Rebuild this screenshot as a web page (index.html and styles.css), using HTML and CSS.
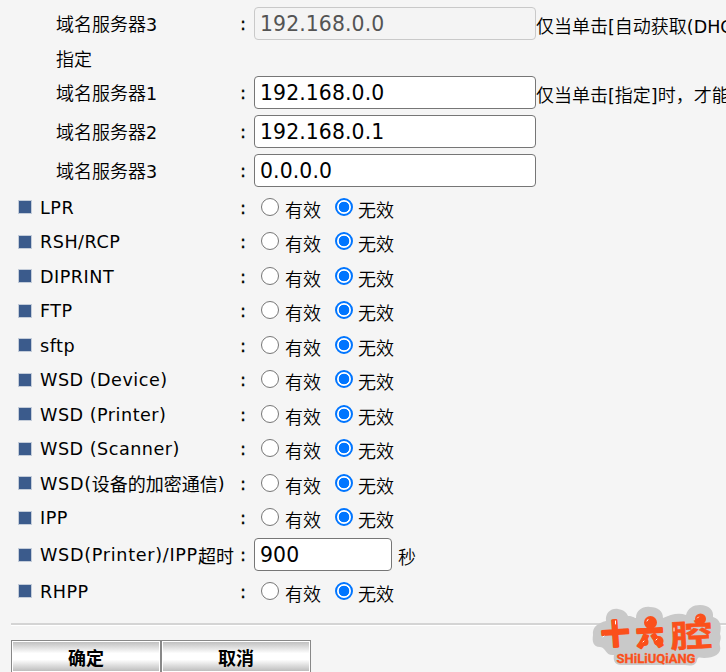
FILE: index.html
```html
<!DOCTYPE html>
<html lang="zh-CN">
<head>
<meta charset="utf-8">
<title>网络设置</title>
<link rel="stylesheet" href="styles.css">
</head>
<body>
<form class="settings">
  <div class="row field"><span class="label sub">域名服务器<i>3</i></span><span class="colon">:</span><input class="ip" value="192.168.0.0" disabled><span class="note">仅当单击<i>[</i>自动获取<i>(DHC</i></span></div>
  <div class="row heading"><span class="label sub">指定</span></div>
  <div class="row field"><span class="label sub">域名服务器<i>1</i></span><span class="colon">:</span><input class="ip" value="192.168.0.0"><span class="note">仅当单击<i>[</i>指定<i>]</i>时，才能</span></div>
  <div class="row field"><span class="label sub">域名服务器<i>2</i></span><span class="colon">:</span><input class="ip" value="192.168.0.1"></div>
  <div class="row field"><span class="label sub">域名服务器<i>3</i></span><span class="colon">:</span><input class="ip" value="0.0.0.0"></div>
  <div class="row"><span class="label item">LPR</span><span class="colon">:</span><label class="opt"><input type="radio" name="lpr">有效</label><label class="opt"><input type="radio" name="lpr" checked>无效</label></div>
  <div class="row"><span class="label item">RSH/RCP</span><span class="colon">:</span><label class="opt"><input type="radio" name="rsh">有效</label><label class="opt"><input type="radio" name="rsh" checked>无效</label></div>
  <div class="row"><span class="label item">DIPRINT</span><span class="colon">:</span><label class="opt"><input type="radio" name="diprint">有效</label><label class="opt"><input type="radio" name="diprint" checked>无效</label></div>
  <div class="row"><span class="label item">FTP</span><span class="colon">:</span><label class="opt"><input type="radio" name="ftp">有效</label><label class="opt"><input type="radio" name="ftp" checked>无效</label></div>
  <div class="row"><span class="label item">sftp</span><span class="colon">:</span><label class="opt"><input type="radio" name="sftp">有效</label><label class="opt"><input type="radio" name="sftp" checked>无效</label></div>
  <div class="row"><span class="label item">WSD (Device)</span><span class="colon">:</span><label class="opt"><input type="radio" name="device">有效</label><label class="opt"><input type="radio" name="device" checked>无效</label></div>
  <div class="row"><span class="label item">WSD (Printer)</span><span class="colon">:</span><label class="opt"><input type="radio" name="printer">有效</label><label class="opt"><input type="radio" name="printer" checked>无效</label></div>
  <div class="row"><span class="label item">WSD (Scanner)</span><span class="colon">:</span><label class="opt"><input type="radio" name="scanner">有效</label><label class="opt"><input type="radio" name="scanner" checked>无效</label></div>
  <div class="row"><span class="label item tight">WSD(<b>设备的加密通信</b>)</span><span class="colon">:</span><label class="opt"><input type="radio" name="secure">有效</label><label class="opt"><input type="radio" name="secure" checked>无效</label></div>
  <div class="row"><span class="label item">IPP</span><span class="colon">:</span><label class="opt"><input type="radio" name="ipp">有效</label><label class="opt"><input type="radio" name="ipp" checked>无效</label></div>
  <div class="row field"><span class="label item tight">WSD(Printer)/IPP<b>超时</b></span><span class="colon">:</span><input class="ip seconds" value="900"><span class="note unit">秒</span></div>
  <div class="row"><span class="label item">RHPP</span><span class="colon">:</span><label class="opt"><input type="radio" name="rhpp">有效</label><label class="opt"><input type="radio" name="rhpp" checked>无效</label></div>
  <hr>
  <div class="actions"><button type="button">确定</button><button type="button">取消</button></div>
</form>
<svg class="logo" viewBox="0 0 140 76" width="140" height="76" aria-label="十六腔">
  <path fill="#c9c9c9" d="M7 39C6 31 12 27 20 25C19 17 25 12 32 13C38 14 41 17 42 20C47 20 48 22 50 22C50 14 57 10 64 11C72 11 77 15 77 22C84 19 92 16 100 19C102 12 107 9 114 9C123 9 128 14 127 21C134 23 136 29 134 38C136 43 133 45 134 50C136 58 128 62 118 62C115 62 112 60 111 64C110 70 105 70 99 69H37C28 70 27 63 28 59C19 60 21 52 14 51C7 51 6 45 7 39Z"/>
  <g class="logo-name">
    <text transform="translate(16 49) rotate(-4)">十</text>
    <text transform="translate(51 50) rotate(-3) scale(.96 .98)">六</text>
    <text transform="translate(85 52) rotate(-3) scale(1.5 1.12)" class="logo-wide">腔</text>
  </g>
  <g fill="#fb501b"><circle cx="64.5" cy="26.5" r="6.5"/><circle cx="114.5" cy="23" r="5.5"/><circle cx="72.5" cy="45" r="5"/><circle cx="58.5" cy="46" r="4"/></g>
  <path fill="none" stroke="#fff" stroke-linecap="round" d="M29.5 25V28M17 41L18 40M61 25L62 23.5M57 46L58 45M70 44L71 43M88 32V35M111.500 22L112.500 21"/>
  <text class="logo-latin" x="30.5" y="67" textLength="79" lengthAdjust="spacingAndGlyphs">SHiLiUQiANG</text>
</svg>
</body>
</html>
```

FILE: styles.css
```css
* { box-sizing: border-box; }
body {
  margin: 0;
  height: 672px;
  overflow: hidden;
  position: relative;
  background: #f5f5f5;
  color: #000;
  font: 350 18px/30px "Noto Sans CJK SC", sans-serif;
}
.settings { width: 726px; padding-top: 4px; }
.row { display: flex; align-items: center; height: 34.5px; white-space: nowrap; }
.row > * { flex-shrink: 0; }
.field { height: 39px; }
.heading { height: 30px; }
.label { width: 240px; }
.sub { padding: 0 0 1px 56px; }
i { font: 17.5px "DejaVu Sans", sans-serif; }
.item {
  display: flex;
  align-items: center;
  padding: 1px 0 0 19px;
  font: 17.6px/30px "DejaVu Sans", sans-serif;
  letter-spacing: 0.5px;
}
.tight { letter-spacing: 0.7px; }
.item b { font: 18px/30px "Noto Sans CJK SC", sans-serif; letter-spacing: 0; margin-top: -1px; }
.item::before {
  content: "";
  width: 12px;
  height: 12px;
  margin: -1px 9px 0 0;
  background: #3b5b8c;
  box-shadow: 0 0 0 1px #c3ccd9;
}
.colon { width: 14px; padding-top: 1px; font: 18px/30px "DejaVu Sans", sans-serif; -webkit-text-stroke: 0.3px #000; }
.ip {
  width: 282px;
  height: 33px;
  margin: 0;
  padding: 2px 5px 1px;
  border: 1px solid #767676;
  border-radius: 4px;
  background: #fff;
  color: #000;
  font: 20.4px "DejaVu Sans", sans-serif;
  letter-spacing: 0.1px;
}
.ip:disabled { background: #f4f4f4; border-color: #c9c9c9; color: #545454; }
.note { padding-top: 2px; }
.seconds { width: 138px; }
.unit { padding-left: 6px; }
.opt { display: flex; align-items: center; height: 30px; padding-top: 3px; margin-left: 7px; }
.opt + .opt { margin-left: 14px; }
.opt input {
  appearance: none;
  width: 18px;
  height: 18px;
  margin: -4px 6px 0 0;
  border: 1.5px solid #767676;
  border-radius: 50%;
  background: #fff;
}
.opt input:checked {
  margin-right: 5px;
  border: 2px solid #0075ff;
  background: radial-gradient(circle, #0075ff 0 5px, #fff 5.6px);
}
hr { width: 715px; height: 3px; margin: 14px 0 0 11px; border: 0; background: #d4d4d4; border-bottom: 1px solid #fff; }
.actions { display: flex; margin: 14.5px 0 0 11px; }
button {
  width: 150px;
  height: 32px;
  padding: 0;
  border: 1px solid #888;
  border-bottom: 0;
  box-shadow: inset 0 0 0 1px #fff;
  background: linear-gradient(#bbb 0, #fff 40%, #fff 60%, #b8b8b8 100%);
  color: #000;
  font: bold 18px "Noto Sans CJK SC", sans-serif;
}
.logo { position: absolute; left: 586px; top: 596px; }
.logo-name { fill: #fb501b; stroke: #fb501b; stroke-width: 2.6; stroke-linejoin: round; font: bold 28px "Noto Sans CJK SC", sans-serif; }
.logo-wide { stroke-width: 0.5; }
.logo-latin { fill: #fb501b; stroke: #fb501b; stroke-width: 0.3; font: bold 12px Roboto, sans-serif; }
```
